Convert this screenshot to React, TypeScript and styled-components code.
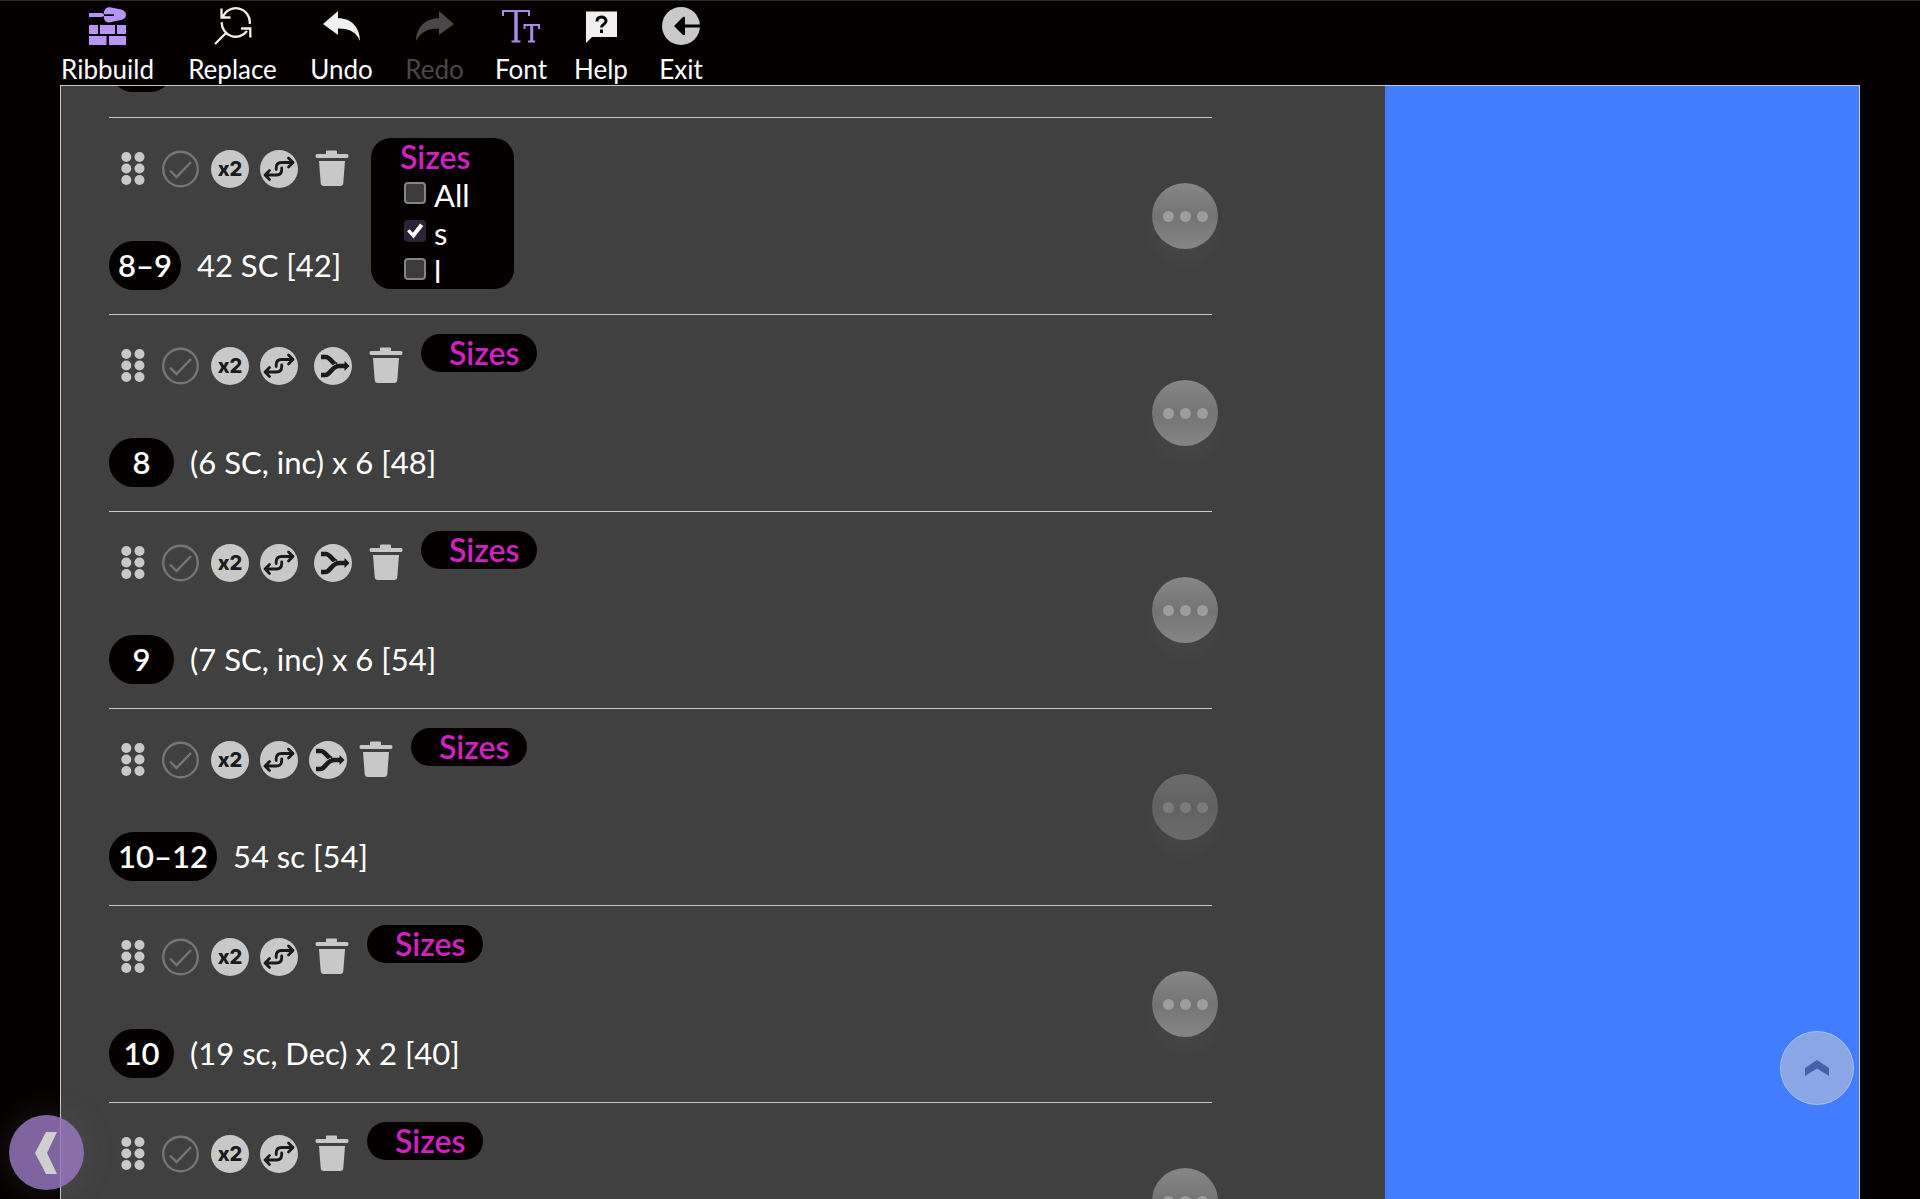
import React, { useState } from "react";
import styled, { createGlobalStyle } from "styled-components";

const GlobalStyle = createGlobalStyle`
  *, *::before, *::after { box-sizing: border-box; }
  body {
    margin: 0;
    background: #050000;
    color: #fff;
    font-family: Lato, "Liberation Sans", sans-serif;
  }
  button { font: inherit; color: inherit; }
`;

const Page = styled.div`
  display: flex;
  flex-direction: column;
  height: 100vh;
  overflow: hidden;
  border-top: 1px solid #2a2829;
`;

const Toolbar = styled.nav`
  display: flex;
  gap: 30px;
  padding: 6px 60px 0;
  height: 84px;
  flex: none;
`;

const ToolbarButton = styled.button<{ $width: number }>`
  display: flex;
  flex-direction: column;
  align-items: center;
  width: ${(p) => p.$width}px;
  gap: 9px;
  padding: 0;
  border: 0;
  background: none;
  font-size: 26px;
  line-height: 30px;
  white-space: nowrap;
  cursor: pointer;
  &:disabled { color: #4b4748; cursor: default; }
  svg { flex: none; }
`;

const Workspace = styled.main`
  flex: 1;
  min-height: 0;
  display: flex;
  margin: 0 60px;
  border: 1px solid #c9c9c9;
  border-bottom: 0;
  background: #404040;
`;

const Editor = styled.section`
  flex: 1;
  min-width: 0;
  overflow: hidden;
  padding: 0 173px 0 48px;
`;

const Preview = styled.aside`
  width: 474px;
  background: #427dff;
`;

const RowList = styled.ol`
  list-style: none;
  margin: 0;
  padding: 0;
`;

const ScrolledRow = styled.div`
  display: flex;
  align-items: flex-end;
  height: 31px;
  padding-bottom: 25px;
`;

const Row = styled.li`
  display: flex;
  justify-content: space-between;
  align-items: center;
  height: 197px;
  border-top: 1px solid #c9c9c9;
`;

const RowBody = styled.div`
  align-self: stretch;
  display: flex;
  flex-direction: column;
  justify-content: space-between;
  padding: 19px 0 24px;
`;

const Tools = styled.div`
  display: flex;
  align-items: flex-start;
  gap: 11px;
  padding-left: 12px;
`;

const IconButton = styled.button<{ $wide?: boolean; $grip?: boolean }>`
  display: flex;
  align-items: center;
  justify-content: center;
  flex: none;
  width: ${(p) => (p.$grip ? 24 : 38)}px;
  height: 38px;
  margin: 13px ${(p) => (p.$grip ? 6 : 0)}px 0 ${(p) => (p.$wide ? 5 : 0)}px;
  padding: 0;
  border: 0;
  background: none;
  cursor: pointer;
`;

const DoubleButton = styled(IconButton)`
  border-radius: 50%;
  background: #c8c8c8;
  color: #1b1b1b;
  font-family: Inter, "Liberation Sans", sans-serif;
  font-size: 20px;
  font-weight: 800;
  line-height: 38px;
`;

const SizesAnchor = styled.div`
  position: relative;
  height: 38px;
  margin-left: 4px;
`;

const SizesPill = styled.button`
  width: 116px;
  height: 38px;
  padding: 0 0 0 28px;
  border: 0;
  border-radius: 19px;
  background: #050000;
  color: #cf22c0;
  font-size: 32px;
  font-weight: 600;
  line-height: 38px;
  text-align: left;
  cursor: pointer;
`;

const SizesCard = styled.fieldset`
  position: absolute;
  top: 1px;
  left: 4px;
  width: 143px;
  height: 151px;
  margin: 0;
  padding: 0 0 0 29px;
  border: 0;
  border-radius: 20px;
  background: #050000;
`;

const SizesTitle = styled.div`
  height: 38px;
  color: #cf22c0;
  font-size: 32px;
  font-weight: 600;
  line-height: 38px;
`;

const SizeOption = styled.label`
  display: flex;
  gap: 8px;
  height: 38px;
  padding-left: 4px;
  font-size: 31px;
  line-height: 38px;
`;

const SizeCheckbox = styled.input`
  appearance: none;
  flex: none;
  width: 22px;
  height: 22px;
  margin: 6px 0 0;
  border: 2px solid #858383;
  border-radius: 4px;
  background: #3b3b3b;
  &:checked {
    border-color: #2b2338;
    background: #2b2338;
  }
  &:checked::before {
    content: "";
    display: block;
    width: 18px;
    height: 18px;
    background: #fff;
    clip-path: polygon(6% 52%, 20% 40%, 38% 60%, 78% 8%, 96% 22%, 42% 92%);
  }
`;

const Instruction = styled.div`
  display: flex;
  align-items: center;
  gap: 16px;
  font-size: 31px;
  line-height: 49px;
  white-space: nowrap;
`;

const RoundBadge = styled.span`
  display: inline-block;
  flex: none;
  min-width: 65px;
  height: 49px;
  padding: 0 9px;
  border-radius: 25px;
  background: #050000;
  font-weight: 600;
  text-align: center;
`;

const MoreButton = styled.button<{ $dim?: boolean }>`
  display: flex;
  align-items: center;
  justify-content: center;
  gap: 6px;
  flex: none;
  width: 66px;
  height: 66px;
  margin-right: -6px;
  padding: 0;
  border: 0;
  border-radius: 50%;
  background: ${(p) =>
    p.$dim
      ? "linear-gradient(#6b6b6b, #626262 50%, #6b6b6b)"
      : "linear-gradient(#868686, #747474 52%, #868686)"};
  box-shadow: 0 14px 18px rgba(255, 255, 255, 0.03);
  cursor: pointer;
  i {
    width: 11px;
    height: 11px;
    border-radius: 50%;
    background: ${(p) => (p.$dim ? "#7b7b7b" : "#9d9d9d")};
  }
`;

const FloatingButton = styled.button`
  position: fixed;
  display: flex;
  align-items: center;
  justify-content: center;
  padding: 0;
  border-radius: 50%;
  cursor: pointer;
`;

const BackButton = styled(FloatingButton)`
  left: 9px;
  bottom: 9px;
  width: 75px;
  height: 75px;
  border: 0;
  background: rgba(151, 119, 191, 0.84);
  box-shadow: 0 0 32px rgba(120, 120, 120, 0.22);
`;

const TopButton = styled(FloatingButton)`
  right: 66px;
  bottom: 94px;
  width: 74px;
  height: 74px;
  border: 1px solid #a9c0f6;
  background: #8ba6e5;
`;

const Icon = ({ w = 38, children }: { w?: number; children: React.ReactNode }) => (
  <svg width={w} height={38} viewBox={`0 0 ${w} 38`} fill="none" aria-hidden="true">
    {children}
  </svg>
);

const BuildIcon = () => (
  <Icon>
    <g fill="#b794f6">
      <path d="M0 6h13l2 1v2l-2 1H0z" />
      <path d="M15 7.200V4.500C16 1.500 18 0 21 .3L32 2.600C35 3.500 37 5 37 8s-2 4-5 5L21 15.300C18 15.800 16 14.500 15 11.500V9h10V7.200z" />
      <path d="M0 18h9v9H0zM11 18h15v9H11zM28 18h9v9h-9zM0 29h17.500v9H0zM20 29h17v9H20z" />
    </g>
  </Icon>
);

const ReplaceIcon = () => (
  <Icon>
    <g stroke="#f1f0f0" strokeWidth="2.300">
      <path d="M7.500 1.500v9h9M8.600 10.600A14 14 0 0 1 35.700 17" />
      <path d="M7.700 15.300A14 14 0 0 0 33 24M27 21.500h9.300v9M12 26 1 37" />
    </g>
  </Icon>
);

const UndoIcon = () => (
  <Icon>
    <path fill="#f1f0f0" d="M0 17 15 4v7.200C28 11 37 20 37 34 34 26 27 21.500 15 21.500V28z" />
  </Icon>
);

const RedoIcon = () => (
  <Icon>
    <path fill="#4b4748" d="M38 17 23 4v7.200C10 11 0 20 0 34c4-8 11-12.500 23-12.500V28z" />
  </Icon>
);

const FontIcon = () => (
  <Icon>
    <g stroke="#a98ae8" strokeWidth="2">
      <path d="M1 9V4h26v5M9.500 34.500h9M22.500 22v-4H37v4M26 34.500h7" />
      <path strokeWidth="3.500" d="M14 4v30" />
      <path strokeWidth="3" d="M29.700 18v16" />
    </g>
  </Icon>
);

const HelpIcon = () => (
  <Icon>
    <path fill="#f1f0f0" d="M4 4.500h31v25.500H10l-6 6z" />
    <path stroke="#050000" strokeWidth="3" d="M15 14.500c0-3 2-4.500 4.500-4.500s4.500 1.500 4.500 4c0 3.500-4.500 3-4.500 6.500" />
    <path fill="#050000" d="M18 22.500h3V26h-3z" />
  </Icon>
);

const ExitIcon = () => (
  <Icon>
    <circle cx="19" cy="19" r="19" fill="#c9c9c9" />
    <path fill="#050000" d="M12 19 21 10q2-1 2 1v6.500h15v3H23V27q0 2-2 1z" />
  </Icon>
);

const GripIcon = () => (
  <Icon w={24}>
    <g fill="#c8c8c8">
      {[7, 18.5, 30].map((y) => (
        <React.Fragment key={y}>
          <circle cx="5.300" cy={y} r="5" />
          <circle cx="18.500" cy={y} r="5" />
        </React.Fragment>
      ))}
    </g>
  </Icon>
);

const CheckIcon = () => (
  <Icon>
    <g stroke="#757575" strokeWidth="2.400">
      <circle cx="18.500" cy="19" r="17.300" />
      <path d="m8 20.500 6.500 6.500L29 12" />
    </g>
  </Icon>
);

const SwapIcon = () => (
  <Icon>
    <circle cx="19" cy="19" r="19" fill="#c8c8c8" />
    <g stroke="#1b1b1b" strokeWidth="2.800" strokeLinecap="round" strokeLinejoin="round">
      <path d="M16.200 19.500v-1.500c0-3.500 2-5.500 5.300-5.500H33M28.500 8l4.500 4.500-4.500 4.500" />
      <path d="M21.700 18v1.500c0 3.500-2 5.500-5.300 5.500H5M9.500 20.500 5 25l4.500 4.500" />
    </g>
  </Icon>
);

const MergeIcon = () => (
  <Icon>
    <circle cx="19" cy="19" r="19" fill="#c8c8c8" />
    <path stroke="#1b1b1b" strokeWidth="4.600" d="M7 10h5c4 0 6.500 7 11 8" />
    <path stroke="#c8c8c8" strokeWidth="6" d="M14 27c3-2 5-6.500 9-7.700" />
    <path stroke="#1b1b1b" strokeWidth="4.600" d="M7 28h4.500c4.500 0 6.500-9 13.500-9h7" />
    <path fill="#1b1b1b" d="m30.500 14 5 5-5 5z" />
  </Icon>
);

const TrashIcon = () => (
  <Icon>
    <g fill="#c8c8c8">
      <path d="M12 4V1.500q0-1 1-1h9q1 0 1 1V4h10q1.500 0 1.500 2T33 8H3Q1.500 8 1.500 6T3 4z" />
      <path d="M5 11h26l-1.700 22q-.3 3-3 3H9.700q-2.700 0-3-3z" />
    </g>
  </Icon>
);

const toolbarItems = [
  { label: "Ribbuild", width: 95, icon: <BuildIcon /> },
  { label: "Replace", width: 95, icon: <ReplaceIcon /> },
  { label: "Undo", width: 63, icon: <UndoIcon /> },
  { label: "Redo", width: 63, icon: <RedoIcon />, disabled: true },
  { label: "Font", width: 50, icon: <FontIcon /> },
  { label: "Help", width: 50, icon: <HelpIcon /> },
  { label: "Exit", width: 50, icon: <ExitIcon /> },
];

type PatternRow = {
  round?: string;
  text?: string;
  merge?: boolean;
  compact?: boolean;
  open?: boolean;
  dim?: boolean;
};

const rows: PatternRow[] = [
  { round: "8–9", text: "42 SC [42]", open: true },
  { round: "8", text: "(6 SC, inc) x 6 [48]", merge: true },
  { round: "9", text: "(7 SC, inc) x 6 [54]", merge: true },
  { round: "10–12", text: "54 sc [54]", merge: true, compact: true, dim: true },
  { round: "10", text: "(19 sc, Dec) x 2 [40]" },
  {},
];

const SizesPanel = () => {
  const [picked, setPicked] = useState<Record<string, boolean>>({ s: true });
  return (
    <SizesCard aria-label="Sizes">
      <SizesTitle>Sizes</SizesTitle>
      {["All", "s", "l"].map((size) => (
        <SizeOption key={size}>
          <SizeCheckbox
            type="checkbox"
            checked={!!picked[size]}
            onChange={() => setPicked({ ...picked, [size]: !picked[size] })}
          />
          {size}
        </SizeOption>
      ))}
    </SizesCard>
  );
};

const PatternRowView = ({ row }: { row: PatternRow }) => (
  <Row>
    <RowBody>
      <Tools>
        <IconButton $grip aria-label="Move"><GripIcon /></IconButton>
        <IconButton aria-label="Done"><CheckIcon /></IconButton>
        <DoubleButton>x2</DoubleButton>
        <IconButton aria-label="Swap"><SwapIcon /></IconButton>
        {row.merge && (
          <IconButton $wide={!row.compact} aria-label="Merge"><MergeIcon /></IconButton>
        )}
        <IconButton $wide={!row.compact} aria-label="Delete"><TrashIcon /></IconButton>
        <SizesAnchor>{row.open ? <SizesPanel /> : <SizesPill>Sizes</SizesPill>}</SizesAnchor>
      </Tools>
      {row.round && (
        <Instruction>
          <RoundBadge>{row.round}</RoundBadge>
          <span>{row.text}</span>
        </Instruction>
      )}
    </RowBody>
    <MoreButton $dim={row.dim} aria-label="More">
      <i /><i /><i />
    </MoreButton>
  </Row>
);

export default function App() {
  return (
    <Page>
      <GlobalStyle />
      <Toolbar>
        {toolbarItems.map((item) => (
          <ToolbarButton key={item.label} $width={item.width} disabled={item.disabled}>
            {item.icon}
            {item.label}
          </ToolbarButton>
        ))}
      </Toolbar>
      <Workspace>
        <Editor>
          <ScrolledRow><RoundBadge /></ScrolledRow>
          <RowList>
            {rows.map((row, i) => (
              <PatternRowView key={i} row={row} />
            ))}
          </RowList>
        </Editor>
        <Preview />
      </Workspace>
      <BackButton aria-label="Back">
        <svg width="23" height="42" viewBox="0 0 23 42" aria-hidden="true">
          <path fill="#cfcfcf" d="M11 0h11L12 21l10 21H11L0 21z" />
        </svg>
      </BackButton>
      <TopButton aria-label="To top">
        <svg width="26" height="16" viewBox="0 0 26 16" aria-hidden="true">
          <path fill="#4462a8" d="M1 8 13 0l12 8v8L13 8.500 1 16z" />
        </svg>
      </TopButton>
    </Page>
  );
}
